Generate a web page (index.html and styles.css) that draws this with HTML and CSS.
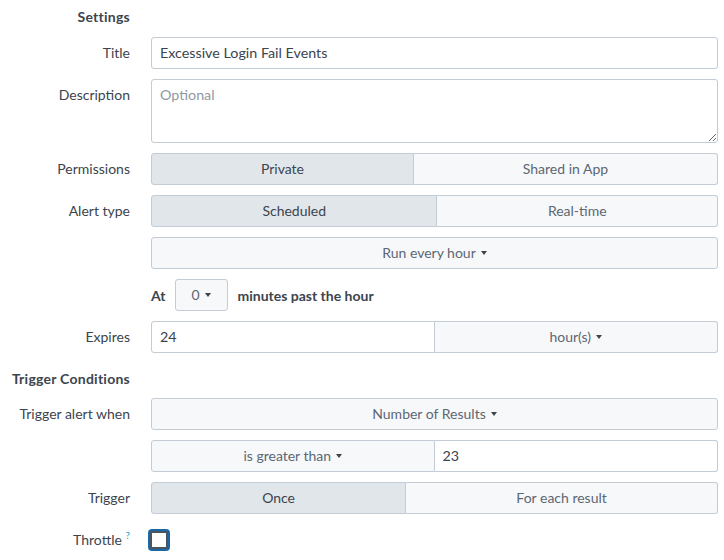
FILE: index.html
```html
<!DOCTYPE html>
<html>
<head>
<meta charset="utf-8">
<link rel="stylesheet" href="styles.css">
</head>
<body>
<form class="form">
  <div class="row head"><div class="label h">Settings</div></div>

  <div class="row">
    <div class="label">Title</div>
    <div class="ctrl"><input class="text" type="text" value="Excessive Login Fail Events"></div>
  </div>

  <div class="row">
    <div class="label">Description</div>
    <div class="ctrl"><textarea class="area" placeholder="Optional"></textarea></div>
  </div>

  <div class="row">
    <div class="label">Permissions</div>
    <div class="ctrl group">
      <div class="btn active">Private</div>
      <div class="btn">Shared in App</div>
    </div>
  </div>

  <div class="row">
    <div class="label">Alert type</div>
    <div class="ctrl group">
      <div class="btn active">Scheduled</div>
      <div class="btn">Real-time</div>
    </div>
  </div>

  <div class="row">
    <div class="label"></div>
    <div class="ctrl group">
      <div class="btn">Run every hour <span class="caret"></span></div>
    </div>
  </div>

  <div class="row">
    <div class="label"></div>
    <div class="ctrl inline">
      <span class="bold">At</span>
      <div class="btn small">0 <span class="caret"></span></div>
      <span class="bold">minutes past the hour</span>
    </div>
  </div>

  <div class="row">
    <div class="label">Expires</div>
    <div class="ctrl half">
      <input class="text first" type="text" value="24">
      <div class="btn last">hour(s) <span class="caret"></span></div>
    </div>
  </div>

  <div class="row head2"><div class="label h">Trigger Conditions</div></div>

  <div class="row">
    <div class="label">Trigger alert when</div>
    <div class="ctrl group">
      <div class="btn">Number of Results <span class="caret"></span></div>
    </div>
  </div>

  <div class="row">
    <div class="label"></div>
    <div class="ctrl half">
      <div class="btn first">is greater than <span class="caret"></span></div>
      <input class="text last" type="text" value="23">
    </div>
  </div>

  <div class="row">
    <div class="label">Trigger</div>
    <div class="ctrl group">
      <div class="btn active">Once</div>
      <div class="btn">For each result</div>
    </div>
  </div>

  <div class="row">
    <div class="label">Throttle <sup class="help">?</sup></div>
    <div class="ctrl"><span class="check"></span></div>
  </div>
</form>
</body>
</html>
```

FILE: styles.css
```css
html, body {
  margin: 0;
  padding: 0;
  background: #ffffff;
}
body {
  font-family: Lato, "Open Sans", "Liberation Sans", sans-serif;
  font-size: 14px;
  color: #3c444d;
}
.form {
  display: flex;
  flex-direction: column;
  gap: 10px;
  padding-top: 7px;
  width: 718px;
}
.row {
  display: flex;
  min-height: 32px;
}
.row.head {
  min-height: 20px;
}
.row.head2 {
  min-height: 20px;
  margin-top: 6px;
  margin-bottom: -1px;
}
.label {
  width: 130px;
  flex: none;
  text-align: right;
  line-height: 31px;
  margin-right: 21px;
  color: #3c444d;
}
.h {
  line-height: 20px;
  font-weight: 700;
  letter-spacing: 0.25px;
}
.ctrl {
  flex: 1;
  display: flex;
  min-width: 0;
}
.text {
  box-sizing: border-box;
  width: 100%;
  height: 32px;
  border: 1px solid #c3cbd4;
  border-radius: 3px;
  padding: 0 8px 2px;
  font: inherit;
  font-size: 14.3px;
  color: #3c444d;
  background: #fff;
  outline: none;
}
.area {
  box-sizing: border-box;
  width: 100%;
  height: 64px;
  border: 1px solid #c3cbd4;
  border-radius: 3px;
  padding: 6px 8px;
  font: inherit;
  font-size: 14.3px;
  color: #3c444d;
  background: #fff;
  outline: none;
  resize: vertical;
}
.area::placeholder {
  color: #8f99a3;
}
.btn {
  box-sizing: border-box;
  height: 32px;
  display: flex;
  align-items: center;
  justify-content: center;
  gap: 5px;
  flex: 1 1 auto;
  background: #f7f8fa;
  border: 1px solid #c3cbd4;
  color: #5c6773;
  padding: 0 12px 1px;
  white-space: nowrap;
}
.btn.active {
  background: #e1e6eb;
  color: #3c444d;
}
.group .btn:first-child {
  border-radius: 3px 0 0 3px;
}
.group .btn:last-child {
  border-radius: 0 3px 3px 0;
}
.group .btn:only-child {
  border-radius: 3px;
}
.group .btn + .btn {
  border-left: none;
}
.half {
  display: grid;
  grid-template-columns: 1fr 1fr;
}
.half > * {
  width: 100%;
  min-width: 0;
}
.half > .first {
  border-radius: 3px 0 0 3px;
}
.half > .last {
  border-radius: 0 3px 3px 0;
  border-left: none;
}
.caret {
  width: 0;
  height: 0;
  border-left: 3.5px solid transparent;
  border-right: 3.5px solid transparent;
  border-top: 4px solid #3c444d;
  margin-top: 1px;
}
.inline {
  align-items: center;
}
.bold {
  font-weight: 700;
  color: #3c444d;
}
.btn.small {
  flex: none;
  width: 53px;
  margin: 0 10px 0 9px;
  border-radius: 3px;
  padding: 0 0 1px;
}
.help {
  color: #1a9ccf;
  font-size: 10px;
  vertical-align: 0;
  position: relative;
  top: -6px;
}
.check {
  box-sizing: border-box;
  width: 18px;
  height: 18px;
  margin: 7px 0 0 -1px;
  border: 2px solid #4a5563;
  border-radius: 2px;
  background: #fff;
  box-shadow: 0 0 0 2px #1b68a6;
}
```
